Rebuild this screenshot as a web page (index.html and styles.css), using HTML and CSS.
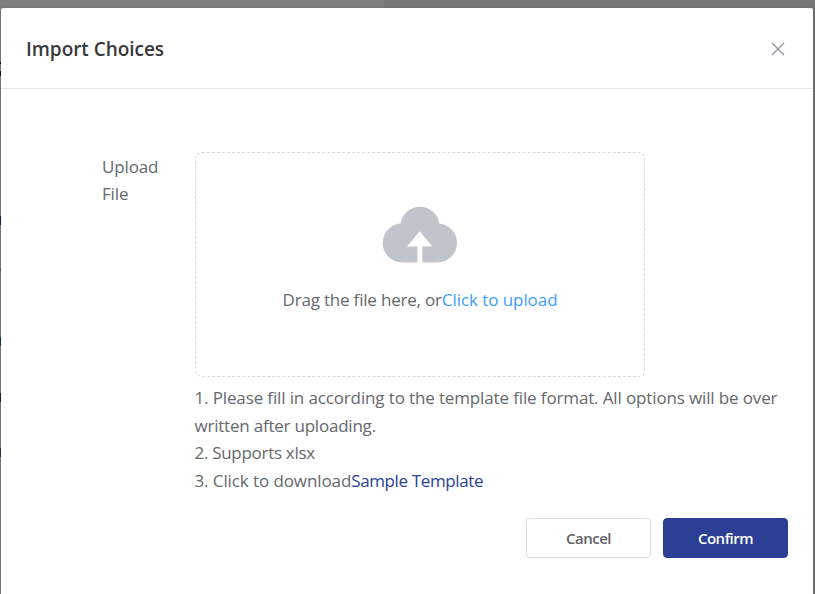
FILE: index.html
```html
<!DOCTYPE html>
<html lang="en">
<head>
<meta charset="utf-8">
<title>Import Choices</title>
<link rel="stylesheet" href="styles.css">
</head>
<body>
<main class="dialog">
  <header class="header">
    <h1 class="title">Import Choices</h1>
    <svg class="close" viewBox="0 0 14 14"><path d="M1 1 13 13M13 1 1 13"/></svg>
  </header>
  <section class="form">
    <div class="label">Upload<br>File</div>
    <div class="content">
      <div class="dropzone">
        <svg class="cloud" viewBox="0 0 76 58"><path d="M20.3 56.6A19.6 19.6 0 0 1 .7 37A19.6 19.6 0 0 1 18.7 17.5A19.5 19.5 0 0 1 57.3 17.5A19.6 19.6 0 0 1 75 37A19.6 19.6 0 0 1 55.4 56.6H40.3V40.5H50.4L37.8 25.2 25 40.5H35.4V56.6Z"/></svg>
        <p class="drop-text"><span class="drag">Drag the file here, or</span><span class="upload">Click to upload</span></p>
      </div>
      <div class="tips">
        <p class="tip-one">1. Please fill in according to the template file format. All options will be over</p>
        <p class="tip-two">written after uploading.</p>
        <p class="tip-three">2. Supports xlsx</p>
        <p><span class="download">3. Click to download</span><a class="template">Sample Template</a></p>
      </div>
    </div>
  </section>
  <footer class="footer">
    <button class="button cancel">Cancel</button>
    <button class="button confirm">Confirm</button>
  </footer>
</main>
</body>
</html>
```
FILE: styles.css
```css
* { box-sizing: border-box; }
body {
  margin: 0;
  height: 594px;
  padding: 8px 2px 0 1px;
  overflow: hidden;
  font: 17px/27.6px "Open Sans", "Noto Sans", sans-serif;
  color: #66686c;
  background:
    linear-gradient(#101820, #101820) 0 62px / 1px 2px no-repeat,
    linear-gradient(#101820, #101820) 0 71px / 1px 5px no-repeat,
    linear-gradient(#10204f, #10204f) 0 216px / 1px 9px no-repeat,
    linear-gradient(#4d5960, #4d5960) 0 269px / 1px 2px no-repeat,
    linear-gradient(#173449, #173449) 0 337px / 1px 9px no-repeat,
    linear-gradient(#222, #222) 0 393px / 1px 9px no-repeat,
    linear-gradient(#29354a, #29354a) 0 448px / 1px 9px no-repeat,
    linear-gradient(90deg, #808080 384px, #777 384px);
}
p, h1 { margin: 0; }
p { white-space: nowrap; }
.dialog {
  height: 600px;
  background: #fff;
  border-radius: 2px;
  box-shadow: 0 1px 3px rgba(0, 0, 0, .3);
}
.header {
  display: flex;
  align-items: center;
  justify-content: space-between;
  height: 81px;
  padding: 1px 28px 0 25px;
  border-bottom: 1px solid #e4e6e9;
}
.title { padding-top: 2px; font-size: 19px; font-weight: 600; color: #37383a; letter-spacing: -.04px; }
.close { width: 14px; height: 14px; margin-top: 1px; fill: none; stroke: #909399; stroke-width: 1.3; }
.form { display: flex; padding: 63px 0 0 101px; }
.label { width: 93px; padding-top: 1px; line-height: 27px; letter-spacing: -.15px; }
.dropzone {
  display: flex;
  flex-direction: column;
  align-items: center;
  width: 450px;
  height: 225px;
  padding-top: 53px;
  border: 1px dashed #d9d9d9;
  border-radius: 7px;
}
.cloud { width: 76px; height: 58px; fill: #c0c4cc; }
.drop-text { margin-top: 22px; }
.drag { letter-spacing: -.19px; }
.upload { color: #409eff; letter-spacing: -.07px; }
.tips { padding-top: 7px; margin-left: -.5px; }
.tip-one { letter-spacing: -.135px; }
.tip-two { letter-spacing: -.22px; }
.tip-three { letter-spacing: -.3px; }
.download { letter-spacing: -.1px; }
.template { color: #2b3f95; letter-spacing: -.37px; }
.footer { display: flex; justify-content: flex-end; gap: 12px; padding: 24px 25px 0 0; }
.button {
  width: 125px;
  height: 40px;
  padding: 0;
  border: 1px solid #dcdfe6;
  border-radius: 4px;
  background: #fff;
  color: #606266;
  font: 600 15px "Open Sans", "Noto Sans", sans-serif;
  letter-spacing: -.5px;
}
.confirm { color: #fff; background: #2b3f95; border-color: #2b3f95; }
```
